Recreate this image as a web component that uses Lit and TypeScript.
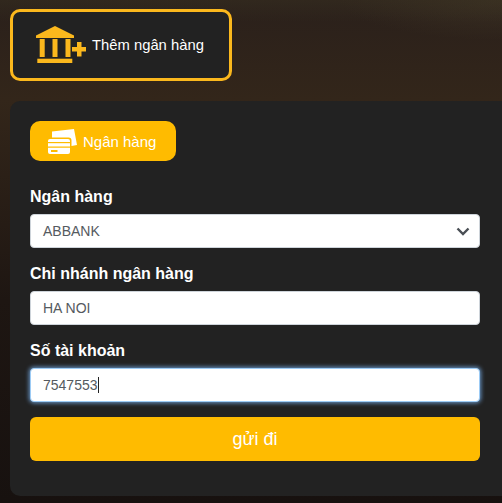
import { LitElement, html, css } from "lit";
import { customElement } from "lit/decorators.js";

@customElement("app-root")
export class AppRoot extends LitElement {
  static styles = css`
    :host {
      display: block;
      width: 502px;
      height: 503px;
      box-sizing: border-box;
      padding: 9px 0 7px 10px;
      overflow: hidden;
      font-family: "Liberation Sans", Arial, sans-serif;
      background:
        linear-gradient(180deg, rgba(60, 52, 34, 0.4) 0, rgba(42, 32, 26, 0) 22px),
        radial-gradient(ellipse 160px 40px at 500px 0, rgba(70, 60, 40, 0.5), rgba(0, 0, 0, 0)),
        linear-gradient(180deg, #2a201b 0, #33261a 100px, #1e1612 300px, #17110f 503px);
    }
    .tab {
      box-sizing: border-box;
      width: 222px;
      height: 72px;
      display: flex;
      align-items: center;
      padding-left: 23px;
      gap: 6px;
      border: 3px solid #fbb81d;
      border-radius: 10px;
      background: #222222;
      color: #ffffff;
      font-size: 14.8px;
    }
    .tab svg { display: block; flex: none; }
    .panel {
      box-sizing: border-box;
      margin-top: 20px;
      height: 395px;
      padding: 20px 22px 0 20px;
      background: #222222;
      border-radius: 10px 0 0 10px;
    }
    .pill {
      box-sizing: border-box;
      width: 146px;
      height: 40px;
      display: flex;
      align-items: center;
      padding-left: 18px;
      gap: 6px;
      background: #ffbb00;
      border-radius: 10px;
      color: #ffffff;
      font-size: 15px;
    }
    .pill svg { display: block; flex: none; }
    .label {
      display: block;
      margin: 0;
      color: #ffffff;
      font-weight: 700;
      font-size: 16px;
      line-height: 18px;
    }
    .label.first { margin-top: 27px; margin-bottom: 8px; }
    .label.next { margin-top: 17px; margin-bottom: 8px; }
    .field {
      box-sizing: border-box;
      display: flex;
      align-items: center;
      width: 450px;
      height: 34px;
      padding: 0 12px;
      background: #ffffff;
      border: 1px solid #ced4da;
      border-radius: 4px;
      color: #555a60;
      font: 14px "Liberation Sans", Arial, sans-serif;
    }
    .field.sel { justify-content: space-between; padding-right: 9px; }
    .field.focus {
      border-color: #9ccbf5;
      box-shadow: 0 0 4px 1px rgba(128, 189, 255, 0.75);
    }
    .caret {
      display: inline-block;
      width: 1px;
      height: 16px;
      background: #222222;
    }
    .send {
      box-sizing: border-box;
      display: block;
      width: 450px;
      height: 44px;
      margin-top: 15px;
      padding: 0;
      border: 0;
      border-radius: 6px;
      background: #ffbb00;
      color: #ffffff;
      font: 18px "Liberation Sans", Arial, sans-serif;
      text-align: center;
    }
  `;

  render() {
    return html`
      <div class="tab">
        <svg width="50" height="38" viewBox="0 0 50 38">
          <path fill="#fbb81d" d="M19 0 L38 9.500 V12 H0 V9.500 Z"/>
          <rect fill="#fbb81d" x="3.700" y="13" width="5" height="18"/>
          <rect fill="#fbb81d" x="16.500" y="13" width="5" height="18"/>
          <rect fill="#fbb81d" x="29.500" y="13" width="5" height="18"/>
          <rect fill="#fbb81d" x="1.300" y="32.700" width="35" height="4.300"/>
          <path fill="#fbb81d" d="M41 16h4.500v5h4.500v4.500h-4.500v5h-4.500v-5h-5V21h5Z"/>
        </svg>
        <span>Thêm ngân hàng</span>
      </div>
      <div class="panel">
        <div class="pill">
          <svg width="29" height="26" viewBox="0 0 29 26">
            <path fill="#ffffff" d="M4 3.500 L26 1 L29 17 L23.500 18 V12.500 Q23.500 9.500 20.500 9.500 H4 Z"/>
            <path fill="#ffffff" d="M0 13 Q0 11 2 11 H20 Q22 11 22 13 V14 H0Z"/>
            <rect fill="#ffffff" x="0" y="15.200" width="22" height="3.300"/>
            <path fill="#ffffff" d="M0 19.800 H22 V24 Q22 26 20 26 H2 Q0 26 0 24Z"/>
            <rect fill="#ffbb00" x="3" y="22" width="6.500" height="2"/>
          </svg>
          <span>Ngân hàng</span>
        </div>
        <div class="label first">Ngân hàng</div>
        <div class="field sel">
          <span>ABBANK</span>
          <svg width="14" height="9" viewBox="0 0 14 9">
            <path fill="none" stroke="#4a4f55" stroke-width="2.400" d="M1.500 1.500 L7 7 L12.500 1.500"/>
          </svg>
        </div>
        <div class="label next">Chi nhánh ngân hàng</div>
        <div class="field">HA NOI</div>
        <div class="label next">Số tài khoản</div>
        <div class="field focus">7547553<span class="caret"></span></div>
        <button class="send">gửi đi</button>
      </div>
    `;
  }
}
